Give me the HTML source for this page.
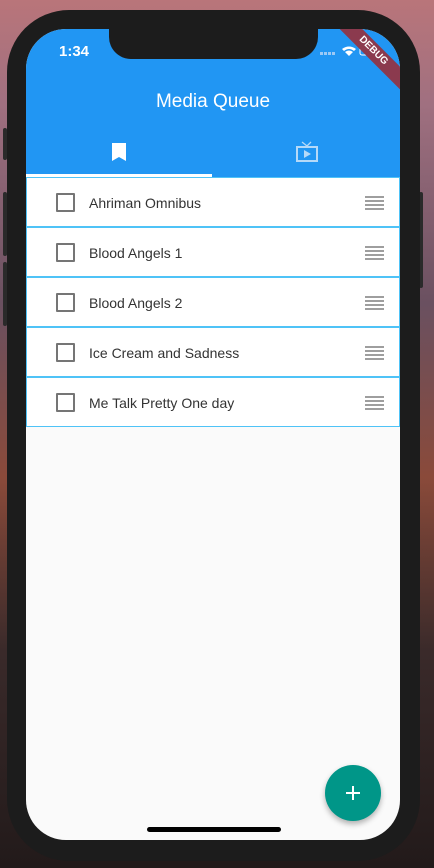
<!DOCTYPE html>
<html><head><style>
*{margin:0;padding:0;box-sizing:border-box}
body{width:434px;height:868px;overflow:hidden;position:relative;font-family:"Liberation Sans",sans-serif;
background:linear-gradient(180deg,#b9757a 0%,#a07080 12%,#6a5060 35%,#8a4a3a 55%,#3a2a2a 75%,#221a1a 100%)}
.phone{position:absolute;left:7px;top:10px;width:413px;height:851px;background:#1c1c1c;border-radius:62px}
.btn{position:absolute;background:#2a2a2a;width:4px;border-radius:2px}
.screen{position:absolute;left:26px;top:29px;width:374px;height:811px;background:#fafafa;border-radius:40px;overflow:hidden}
.bar{position:absolute;left:0;top:0;width:374px;height:148px;background:#2196f3;box-shadow:0 2px 4px rgba(0,0,0,.25)}
.notch{position:absolute;left:83px;top:0;width:209px;height:30px;background:#1c1c1c;border-radius:0 0 22px 22px}
.time{position:absolute;left:33px;top:14px;color:#fff;font-size:15px;font-weight:bold}
.title{position:absolute;left:0;width:374px;top:62px;text-align:center;color:#fff;font-size:19px}
.ind{position:absolute;left:0;top:145px;width:186px;height:3px;background:#fff}
.row{position:absolute;left:0;width:374px;height:50px;background:#fff;border:1px solid #4fc3f7}
.cb{position:absolute;left:29px;top:15px;width:19px;height:19px;border:2px solid #757575;border-radius:1px}
.t{position:absolute;left:62px;top:17px;font-size:14px;color:#333}
.h{position:absolute;left:338px;top:18px;width:19px;height:14px;background:repeating-linear-gradient(180deg,#9e9e9e 0 2px,transparent 2px 4px)}
.fab{position:absolute;left:299px;top:736px;width:56px;height:56px;border-radius:50%;background:#009688;box-shadow:0 3px 6px rgba(0,0,0,.3)}
.home{position:absolute;left:121px;top:798px;width:134px;height:5px;background:#000;border-radius:3px}
.debug{position:absolute;right:-28px;top:14px;width:110px;height:16px;background:#8b3a4e;color:#fff;font-size:10px;font-weight:bold;text-align:center;line-height:16px;transform:rotate(45deg)}
</style></head><body>
<div class="btn" style="left:3px;top:128px;height:32px"></div>
<div class="btn" style="left:3px;top:192px;height:64px"></div>
<div class="btn" style="left:3px;top:262px;height:64px"></div>
<div class="btn" style="left:419px;top:192px;height:96px"></div>
<div class="phone"></div>
<div class="screen">
<div class="bar">
<div class="time">1:34</div>
<svg style="position:absolute;left:294px;top:16px" width="50" height="12"><g fill="#9cc9f5"><rect x="0" y="7" width="3" height="3"/><rect x="4" y="7" width="3" height="3"/><rect x="8" y="7" width="3" height="3"/><rect x="12" y="7" width="3" height="3"/></g><path d="M22 4 Q29 -1 36 4 L34 6 Q29 2 24 6Z M25 7 Q29 4 33 7 L29 11Z" fill="#fff"/><rect x="40" y="2" width="10" height="8" rx="2" fill="none" stroke="#fff" stroke-width="1"/></svg>
<div class="title">Media Queue</div>
<svg style="position:absolute;left:86px;top:114px" width="14" height="18"><path d="M0 0H14V18L7 14L0 18Z" fill="#fff"/></svg>
<svg style="position:absolute;left:270px;top:112px" width="22" height="21"><path d="M6 1L11 5L15 1" stroke="#b5d9f8" stroke-width="1.3" fill="none"/><rect x="1" y="6" width="20" height="14" fill="none" stroke="#b5d9f8" stroke-width="2"/><path d="M8 9V17L15 13Z" fill="#b5d9f8"/></svg>
<div class="ind"></div>
</div>
<div class="notch"></div>
<div class="debug">DEBUG</div>
<div class="row" style="top:148px"><div class="cb"></div><div class="t">Ahriman Omnibus</div><div class="h"></div></div>
<div class="row" style="top:198px"><div class="cb"></div><div class="t">Blood Angels 1</div><div class="h"></div></div>
<div class="row" style="top:248px"><div class="cb"></div><div class="t">Blood Angels 2</div><div class="h"></div></div>
<div class="row" style="top:298px"><div class="cb"></div><div class="t">Ice Cream and Sadness</div><div class="h"></div></div>
<div class="row" style="top:348px"><div class="cb"></div><div class="t">Me Talk Pretty One day</div><div class="h"></div></div>
<div class="fab"><svg width="56" height="56"><path d="M28 21V35M21 28H35" stroke="#fff" stroke-width="2"/></svg></div>
<div class="home"></div>
</div>
</body></html>
